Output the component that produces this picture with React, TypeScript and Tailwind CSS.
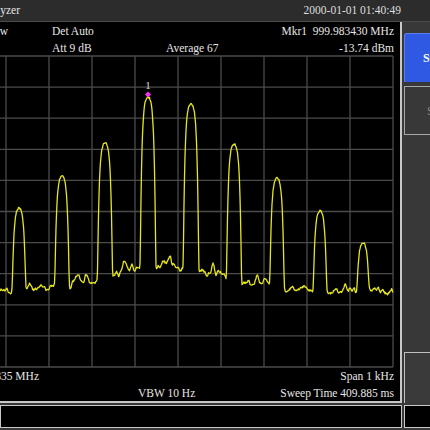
import React from "react";

// deterministic pseudo-random generator so the trace is the same every render
function makeRng(seed: number) {
  let s = seed >>> 0;
  return () => {
    s = (s * 1664525 + 1013904223) >>> 0;
    return s / 4294967296;
  };
}

const PEAKS: [number, number][] = [
  [19, 208],
  [62, 176],
  [105, 143],
  [148, 97],
  [191, 104],
  [234, 144],
  [277, 178],
  [320, 211],
  [363, 243],
];

// small side-lobe bumps on the floor: [x, rise in px]
const BUMPS: [number, number][] = [
  [30, 6],
  [40, 4],
  [77, 10],
  [86, 5],
  [125, 12],
  [132, 6],
  [170, 14],
  [163, 6],
  [213, 12],
  [220, 5],
  [257, 8],
  [265, 4],
  [305, 4],
  [345, 6],
  [352, 3],
  [376, 5],
];

function buildTrace(): string {
  const rand = makeRng(11);
  const coarse: number[] = [];
  for (let i = 0; i < 220; i++) coarse.push(rand() * 2 - 1);
  const K = 31;
  const pts: string[] = [];
  for (let x = 0; x <= 393; x += 0.5) {
    const t = x / 2.2;
    const i = Math.floor(t);
    const f = t - i;
    const w = (1 - Math.cos(f * Math.PI)) / 2;
    const n = coarse[i] * (1 - w) + coarse[i + 1] * w;
    let yf = 292 - 24 * Math.exp(-Math.pow((x - 165) / 85, 2)) + n * 3.4;
    for (const [bx, bh] of BUMPS) {
      yf -= bh * Math.exp(-Math.pow((x - bx) / 2.4, 2));
    }
    let lin = Math.pow(10, -yf / K);
    for (const [px, top] of PEAKS) {
      const d = (x - px) / 1.6;
      if (Math.abs(d) > 12) continue;
      const yp = top + 2.6 * (Math.cosh(d) - 1);
      lin += Math.pow(10, -yp / K);
    }
    const y = -K * Math.log10(lin) + (rand() * 2 - 1) * 0.9;
    pts.push(`${x.toFixed(1)},${y.toFixed(1)}`);
  }
  return pts.join(" ");
}

const TRACE = buildTrace();

const Graticule: React.FC = () => {
  const verticals = [6, 49, 92, 135, 178, 221, 264, 307, 350, 393];
  const horizontals = Array.from({ length: 11 }, (_, k) => 56 + k * 31.1);
  return (
    <svg width={400} height={313} viewBox="0 55 400 313" className="block shrink-0">
      {verticals.map((x) => (
        <line key={`v${x}`} x1={x} y1={56} x2={x} y2={367} stroke="#4b4b4b" strokeWidth={1.3} />
      ))}
      {horizontals.map((y) => (
        <line key={`h${y}`} x1={0} y1={y} x2={393} y2={y} stroke="#4b4b4b" strokeWidth={1.3} />
      ))}
      <polyline points={TRACE} fill="none" stroke="#e6e61c" strokeWidth={1.3} strokeLinejoin="round" />
      {/* marker 1 */}
      <polygon points="148,91.5 151,94.5 148,97.5 145,94.5" fill="#ff2cff" />
      <text x={148} y={89} textAnchor="middle" fontSize={11} fill="#d8d8d8" fontFamily="'Liberation Serif', serif">
        1
      </text>
    </svg>
  );
};

export default function App() {
  return (
    <div
      className="w-[430px] h-[430px] overflow-hidden bg-[#383838] flex flex-col text-[11.5px] text-[#e6e6e6]"
      style={{ fontFamily: "'Liberation Serif', 'Times New Roman', serif" }}
    >
      {/* Title bar */}
      <div className="h-[22px] shrink-0 bg-[#2c2c2c] flex items-center border-b border-[#4a4a4a]">
        <div className="w-[20px] shrink-0 flex justify-end">
          <span className="whitespace-nowrap shrink-0">Spectrum Analyzer</span>
        </div>
        <span className="ml-auto pr-[29px] whitespace-nowrap text-[#dedede]">2000-01-01 01:40:49</span>
      </div>

      <div className="flex h-[381px] shrink-0">
        {/* Measurement window */}
        <div className="w-[402px] shrink-0 bg-black border-r-2 border-b-2 border-[#c8c8c8] flex flex-col">
          <div className="h-[33px] shrink-0 flex flex-col pt-[2px]">
            <div className="h-[16px] flex items-center pr-[6px]">
              <div className="w-[8px] shrink-0 flex justify-end">
                <span className="whitespace-nowrap shrink-0">PNO: Fast&nbsp;&nbsp;IFGain:Low</span>
              </div>
              <span className="ml-[44px] whitespace-nowrap">Det Auto</span>
              <span className="ml-auto whitespace-nowrap">Mkr1&nbsp;&nbsp;999.983430 MHz</span>
            </div>
            <div className="h-[15px] flex items-center pt-[2px] pr-[6px]">
              <span className="ml-[52px] w-[114px] whitespace-nowrap">Att 9 dB</span>
              <span className="whitespace-nowrap">Average 67</span>
              <span className="ml-auto whitespace-nowrap">-13.74 dBm</span>
            </div>
          </div>

          <Graticule />

          <div className="flex-1 flex flex-col">
            <div className="h-[17px] flex items-center pt-[1px] pr-[6px]">
              <div className="w-[39px] shrink-0 flex justify-end">
                <span className="whitespace-nowrap shrink-0">Center 999.9835 MHz</span>
              </div>
              <span className="ml-auto whitespace-nowrap">Span 1 kHz</span>
            </div>
            <div className="h-[17px] flex items-center pt-[1px] pr-[6px]">
              <span className="ml-[138px] whitespace-nowrap">VBW 10 Hz</span>
              <span className="ml-auto whitespace-nowrap">Sweep Time 409.885 ms</span>
            </div>
          </div>
        </div>

        {/* Softkey column */}
        <div className="w-[28px] shrink-0 flex flex-col pl-[2px] pt-[11px] overflow-hidden">
          <div className="w-[26px] h-[49px] shrink-0 bg-[#2f59e2] rounded-tl-[3px] border-t border-l border-[#5a7ff0] flex items-center overflow-hidden">
            <div className="w-[18px] shrink-0" />
            <span className="shrink-0 whitespace-nowrap font-bold text-white text-[12px]">Span</span>
          </div>
          <div className="w-[26px] h-[49px] mt-[4px] shrink-0 border-t border-l border-b border-[#a8a8a8] flex items-center overflow-hidden">
            <div className="w-[22px] shrink-0" />
            <span className="shrink-0 whitespace-nowrap text-[#8a8a8a] text-[12px]">Sweep</span>
          </div>
          <div className="mt-auto h-[51px] shrink-0 border-t border-l border-[#c0c0c0] bg-[#3a3a3a]" />
        </div>
      </div>

      {/* Status strip */}
      <div className="flex mt-[2px] h-[23px] shrink-0">
        <div className="w-[402px] shrink-0 bg-black border border-[#c8c8c8]" />
        <div className="flex-1 ml-[2px] bg-black border-t border-l border-b border-[#c8c8c8]" />
      </div>
    </div>
  );
}
